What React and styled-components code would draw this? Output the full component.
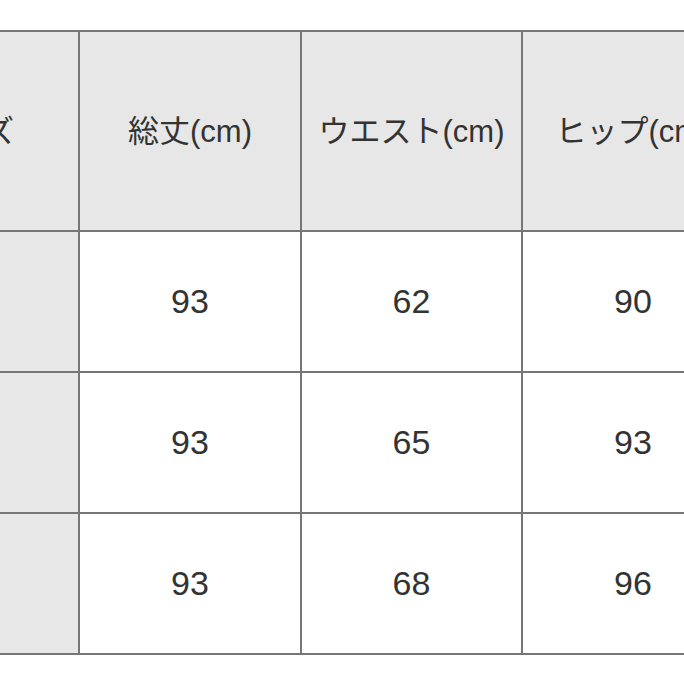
import React from "react";
import styled, { createGlobalStyle } from "styled-components";

const Global = createGlobalStyle`
  html, body { margin: 0; padding: 0; background: #ffffff; }
  body { font-family: "Liberation Sans", "Noto Sans CJK JP", sans-serif; }
`;

const Viewport = styled.div`
  width: 684px;
  height: 684px;
  overflow: hidden;
  background: #ffffff;
  padding-top: 30px;
  box-sizing: border-box;
`;

const Grid = styled.div`
  display: grid;
  grid-template-columns: 220px 220px 219px 220px;
  grid-template-rows: 198px 139px 139px 139px;
  gap: 2px;
  padding: 2px;
  background: #767676;
  width: max-content;
  margin-left: -144px;
`;

const Cell = styled.div`
  display: flex;
  align-items: center;
  justify-content: center;
  background: ${(p) => (p.$shaded ? "#e7e7e7" : "#ffffff")};
  color: #333333;
  font-family: "Liberation Sans", "Noto Sans CJK JP", sans-serif;
  font-size: ${(p) => (p.$head ? "31px" : "34px")};
  white-space: nowrap;
  padding-bottom: ${(p) => (p.$head ? "6px" : "1px")};
`;

const headers = ["サイズ", "総丈(cm)", "ウエスト(cm)", "ヒップ(cm)"];
const rows = [
  ["S", "93", "62", "90"],
  ["M", "93", "65", "93"],
  ["L", "93", "68", "96"],
];

export default function App() {
  return (
    <>
      <Global />
      <Viewport>
        <Grid>
          {headers.map((h) => (
            <Cell key={h} $shaded $head>
              {h}
            </Cell>
          ))}
          {rows.map((r, i) =>
            r.map((v, j) => (
              <Cell key={`${i}-${j}`} $shaded={j === 0}>
                {v}
              </Cell>
            ))
          )}
        </Grid>
      </Viewport>
    </>
  );
}
